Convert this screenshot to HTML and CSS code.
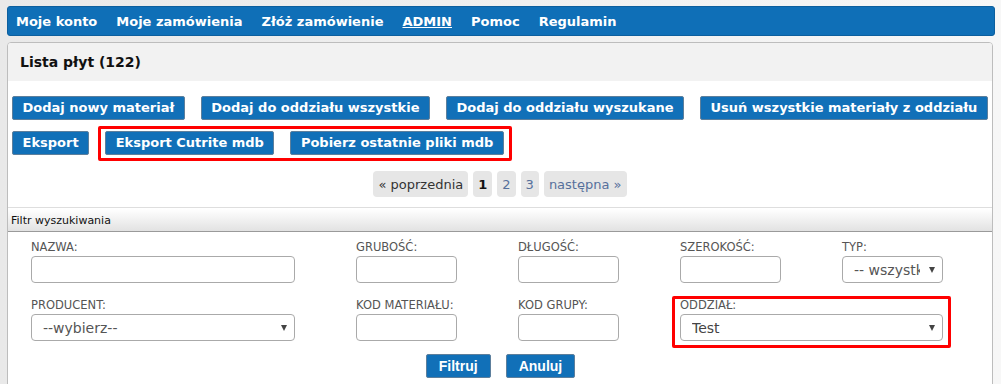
FILE: index.html
```html
<!DOCTYPE html>
<html lang="pl">
<head>
<meta charset="utf-8">
<title>Lista płyt</title>
<link rel="stylesheet" href="styles.css">
</head>
<body>
<nav class="topnav">
  <a href="#">Moje konto</a>
  <a href="#">Moje zamówienia</a>
  <a href="#">Złóż zamówienie</a>
  <a href="#" class="active">ADMIN</a>
  <a href="#">Pomoc</a>
  <a href="#">Regulamin</a>
</nav>
<div class="panel">
  <div class="panel-head">Lista płyt (122)</div>
  <div class="panel-body">
    <div class="btn-row">
      <button class="btn">Dodaj nowy materiał</button>
      <button class="btn">Dodaj do oddziału wszystkie</button>
      <button class="btn">Dodaj do oddziału wyszukane</button>
      <button class="btn">Usuń wszystkie materiały z oddziału</button>
    </div>
    <div class="btn-row second">
      <button class="btn">Eksport</button>
      <span class="hl hl-btns">
        <button class="btn">Eksport Cutrite mdb</button>
        <button class="btn">Pobierz ostatnie pliki mdb</button>
      </span>
    </div>
    <div class="pager">
      <span class="pg prev">« poprzednia</span>
      <span class="pg cur">1</span>
      <a class="pg" href="#">2</a>
      <a class="pg" href="#">3</a>
      <a class="pg" href="#">następna »</a>
    </div>
  </div>
  <div class="sep"></div>
  <div class="filter-head">Filtr wyszukiwania</div>
  <form class="filter">
    <div class="grid">
      <label class="field"><span class="lbl">NAZWA:</span><input type="text" class="inp"></label>
      <label class="field"><span class="lbl">GRUBOŚĆ:</span><input type="text" class="inp"></label>
      <label class="field"><span class="lbl">DŁUGOŚĆ:</span><input type="text" class="inp"></label>
      <label class="field"><span class="lbl">SZEROKOŚĆ:</span><input type="text" class="inp"></label>
      <label class="field"><span class="lbl">TYP:</span><span class="sel"><select class="inp"><option>-- wszystkie --</option></select></span></label>

      <label class="field"><span class="lbl">PRODUCENT:</span><span class="sel"><select class="inp"><option>--wybierz--</option></select></span></label>
      <label class="field"><span class="lbl">KOD MATERIAŁU:</span><input type="text" class="inp"></label>
      <label class="field"><span class="lbl">KOD GRUPY:</span><input type="text" class="inp"></label>
      <label class="field wide hl hl-field"><span class="lbl">ODDZIAŁ:</span><span class="sel"><select class="inp test"><option>Test</option></select></span></label>
    </div>
    <div class="actions">
      <button type="button" class="btn2">Filtruj</button>
      <button type="button" class="btn2">Anuluj</button>
    </div>
  </form>
</div>
</body>
</html>
```

FILE: styles.css
```css
* { box-sizing: border-box; }
html, body { margin: 0; }
body {
  background: linear-gradient(90deg, #e9e9e9 0%, #f1f1f1 60%, #f7f7f7 100%);
  padding: 6px 6px 0 7px;
  font-family: "DejaVu Sans", Verdana, sans-serif;
  color: #222;
  height: 384px;
  overflow: hidden;
}
.topnav {
  display: flex;
  align-items: center;
  gap: 19px;
  height: 30px;
  padding-left: 8px;
  background: #0f6fb7;
  border: 1px solid #0c5f9e;
  border-radius: 3px;
}
.topnav a {
  color: #fff;
  font-weight: bold;
  font-size: 13px;
  text-decoration: none;
}
.topnav a.active { text-decoration: underline; }

.panel {
  margin-top: 6px;
  margin-right: 2px;
  background: #fff;
  border: 1px solid #bdbdbd;
  border-radius: 4px;
  padding-bottom: 40px;
}
.panel-head {
  height: 38px;
  display: flex;
  align-items: center;
  padding-left: 12px;
  background: #f2f2f2;
  border-radius: 3px 3px 0 0;
  font-weight: bold;
  font-size: 14px;
  color: #111;
}
.panel-body { padding: 15px 0 10px 4px; }
.btn-row { display: flex; gap: 16px; }
.btn-row.second { margin-top: 11px; }
.btn {
  height: 24px;
  padding: 0 9.5px;
  background: #1170b8;
  color: #fff;
  border: 1px solid #5d7f9c;
  border-radius: 2px;
  font-family: "DejaVu Sans", Verdana, sans-serif;
  font-weight: bold;
  font-size: 13px;
  line-height: 22px;
  white-space: nowrap;
}
.hl { position: relative; }
.hl::after {
  content: "";
  position: absolute;
  border: 3px solid #ff0000;
  border-radius: 2px;
  pointer-events: none;
}
.hl-btns { display: flex; gap: 16px; }
.hl-btns::after { left: -7px; right: -8px; top: -5px; bottom: -6px; }

.pager {
  margin-top: 16px;
  display: flex;
  justify-content: center;
  gap: 5px;
  padding-right: 4px;
}
.pg {
  height: 26px;
  padding: 0 5px;
  display: flex;
  align-items: center;
  background: #e6e6e6;
  border-radius: 4px;
  font-size: 13px;
  color: #56709c;
  text-decoration: none;
}
.pg.prev { color: #333; }
.pg.cur { color: #111; font-weight: bold; }

.sep { height: 1px; background: #dedede; }
.filter-head {
  margin-top: 1px;
  height: 23px;
  padding-left: 3px;
  display: flex;
  align-items: center;
  font-size: 11px;
  color: #111;
  background: linear-gradient(#ffffff, #e2e2e2);
  border-bottom: 1px solid #9a9a9a;
}
.filter { padding: 9px 0 0 23px; }
.grid {
  display: grid;
  grid-template-columns: 264px 101px 101px 101px 101px;
  column-gap: 61px;
  row-gap: 16px;
}
.field { display: flex; flex-direction: column; }
.field.wide { grid-column: 4 / span 2; }
.lbl {
  font-size: 11.5px;
  line-height: 13px;
  height: 13px;
  margin-bottom: 2px;
  color: #555;
}
.inp {
  width: 100%;
  height: 27px;
  border: 1px solid #aaa;
  border-radius: 4px;
  background: #fff;
  font-family: "DejaVu Sans", Verdana, sans-serif;
  font-size: 14px;
  color: #555;
  padding: 0 22px 0 11px;
  margin: 0;
}
select.inp { appearance: none; -webkit-appearance: none; outline: none; }
select.inp.test { color: #444; }
.sel { position: relative; display: block; }
.sel::after {
  content: "";
  position: absolute;
  right: 8px;
  top: 11px;
  border-left: 3.5px solid transparent;
  border-right: 3.5px solid transparent;
  border-top: 6px solid #444;
  pointer-events: none;
}
.hl-field::after { left: -8px; right: -8px; top: -3px; bottom: -7px; }

.actions {
  margin-top: 13px;
  display: flex;
  justify-content: center;
  gap: 15px;
  padding-right: 22px;
}
.btn2 {
  height: 24px;
  padding: 0 12px;
  background: #1170b8;
  color: #fff;
  border: 1px solid #5d7f9c;
  border-radius: 2px;
  font-family: "Liberation Sans", Arial, sans-serif;
  font-weight: bold;
  font-size: 14px;
}
```
